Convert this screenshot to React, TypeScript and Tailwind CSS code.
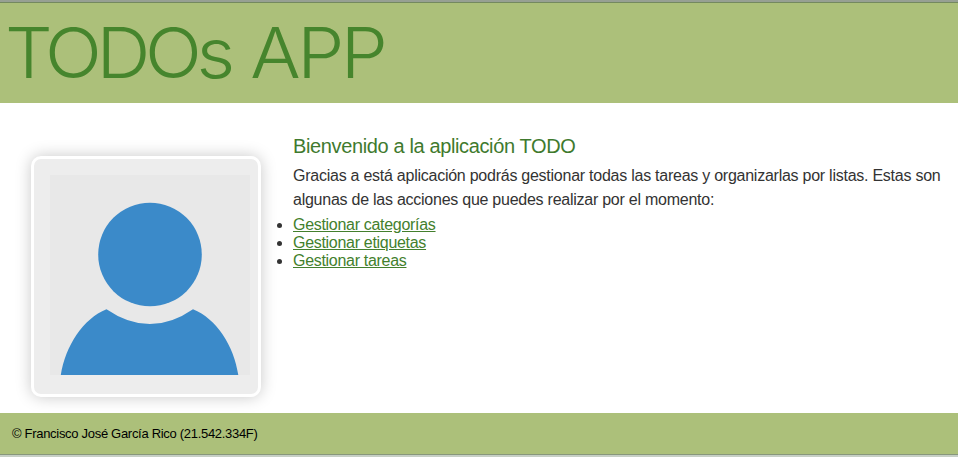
const actions = ["Gestionar categorías", "Gestionar etiquetas", "Gestionar tareas"];

function Avatar() {
  return (
    <div className="mt-[53px] ml-[31px] h-[241px] w-[230px] shrink-0 rounded-[10px] border-[3px] border-white bg-[#ededed] p-4 shadow-[0_0_16px_#c8c8c8]">
      <svg width="200" height="200" viewBox="0 0 200 200" className="block bg-[#e8e8e8]">
        <circle cx="100" cy="79.5" r="51.8" fill="#3b8ac9" />
        <path d="M10.8 200C15.500 171 33 143.500 56.500 134.200Q100 164 143 134.200C166.500 143.500 184 171 188.300 200Z" fill="#3b8ac9" />
      </svg>
    </div>
  );
}

export default function App() {
  return (
    <div className="flex h-[457px] w-[958px] flex-col overflow-hidden bg-white font-['Liberation_Sans',Arial,sans-serif] text-[#333]">
      <header className="h-[103px] border-t-2 border-[#97a093] bg-[#acc07a]">
        <div className="h-px bg-[#74895f]" />
        <h1 className="ml-[5px] origin-left scale-x-[1.07] pt-[2px] font-['Inter',sans-serif] text-[70px] leading-[96px] font-light tracking-[-3.2px] whitespace-nowrap text-[#46852d]">
          <span className="tracking-[-5px]">TODOs</span>
          <span className="[word-spacing:2.5px]"> APP</span>
        </h1>
      </header>
      <main className="flex h-[310px]">
        <Avatar />
        <div className="ml-8 pt-[31px]">
          <h2 className="text-[20px] leading-6 tracking-[-0.37px] text-[#3f7a2e]">Bienvenido a la aplicación TODO</h2>
          <p className="mt-[6px] text-base leading-6 tracking-[-0.25px] whitespace-nowrap">
            Gracias a está aplicación podrás gestionar todas las tareas y organizarlas por listas. Estas son
            <br />
            algunas de las acciones que puedes realizar por el momento:
          </p>
          <ul className="mt-1 list-disc text-base leading-[18px] tracking-[-0.3px]">
            {actions.map((label) => (
              <li key={label}>
                <a href="#" className="text-[#437f2d] underline">{label}</a>
              </li>
            ))}
          </ul>
        </div>
      </main>
      <footer className="h-[44px] bg-[#acc07a] text-black">
        <p className="h-[41px] pt-[13px] pl-3 text-[13px] leading-4 tracking-[-0.3px]">© Francisco José García Rico (21.542.334F)</p>
        <div className="h-px bg-[#87977b]" />
        <div className="h-0.5 bg-[#c6cfc5]" />
      </footer>
    </div>
  );
}
